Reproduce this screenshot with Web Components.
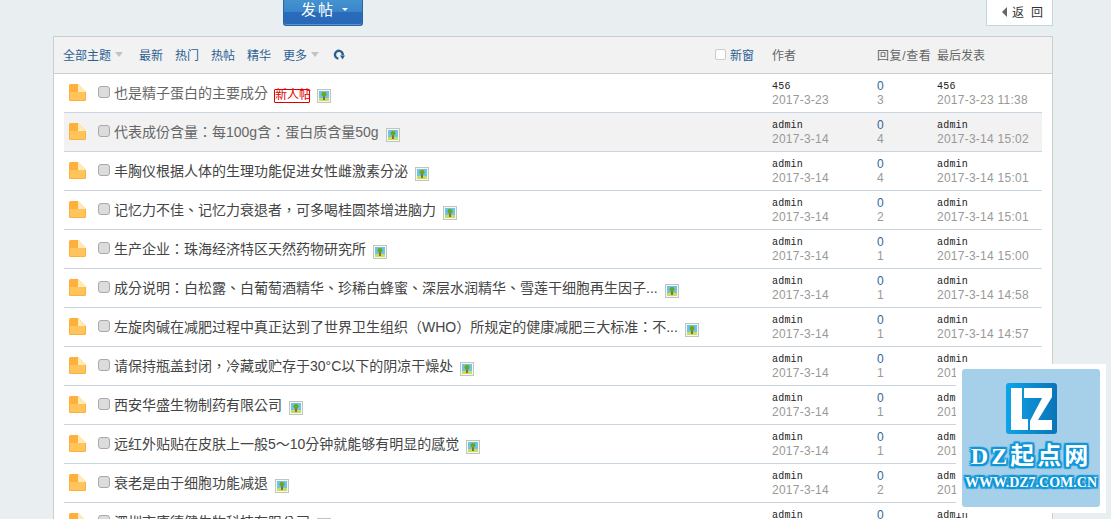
<!DOCTYPE html>
<html>
<head>
<meta charset="utf-8">
<style>
  html, body { margin: 0; padding: 0; height: 519px; overflow: hidden; background: #e9eef1; }
  body { font: 12px "Liberation Sans", "Noto Sans CJK SC", sans-serif; }
</style>
</head>
<body>
<forum-page></forum-page>
<script>
const CJK = '"Liberation Sans", "Noto Sans CJK TC", sans-serif';

class PostButton extends HTMLElement {
  constructor() {
    super();
    this.attachShadow({ mode: "open" }).innerHTML = `
      <style>
        :host { display: flex; box-sizing: border-box; width: 80px; height: 26px; align-items: center; gap: 7px; padding: 0 0 8px 17px;
          border: 1px solid #2a63a6; border-top: 0; border-radius: 0 0 3px 3px; color: #fff; font-size: 15px; letter-spacing: 2px;
          background: linear-gradient(#4592d0 0, #3a86c9 46%, #2a6cbc 47%, #2767b6 100%); box-shadow: inset 0 -1px 0 #5c8fce; }
        i { width: 0; height: 0; border: 3px solid transparent; border-top-color: #fff; border-bottom: 0; margin-top: 2px; }
      </style>
      <span><slot></slot></span><i></i>`;
  }
}
customElements.define("post-button", PostButton);

class BackLink extends HTMLElement {
  constructor() {
    super();
    this.attachShadow({ mode: "open" }).innerHTML = `
      <style>
        :host { display: flex; box-sizing: border-box; width: 67px; height: 26px; align-items: center; padding: 0 0 2px 15px; gap: 5px;
          background: #fff; border: 1px solid #c2d5e3; border-top: 0; color: #333; font-size: 12px; }
        i { width: 0; height: 0; border: 5px solid transparent; border-right-color: #666; border-left: 0; }
        span { letter-spacing: 7px; white-space: nowrap; }
      </style>
      <i></i><span><slot></slot></span>`;
  }
}
customElements.define("back-link", BackLink);

class ThreadHeader extends HTMLElement {
  constructor() {
    super();
    this.attachShadow({ mode: "open" }).innerHTML = `
      <style>
        :host { display: flex; box-sizing: border-box; height: 37px; align-items: center; padding: 0 10px 1px 9px; background: #f2f2f2;
          border-bottom: 1px solid #cdcdcd; font-size: 12px; color: #369; }
        a { color: #2b5f92; }
        .tabs { display: flex; align-items: center; width: 652px; }
        .tabs a { margin-right: 12px; display: flex; align-items: center; }
        .tabs a.first { margin-right: 16px; }
        .tabs a.more { margin-right: 14px; }
        .caret { width: 0; height: 0; border: 4px solid transparent; border-top: 5px solid #bfc5bf; border-bottom: 0; margin-left: 4px; }
        .win { display: flex; align-items: center; width: 57px; gap: 4px; }
        .box { box-sizing: border-box; width: 11px; height: 11px; border: 1px solid #ccc; border-radius: 2px; background: #fdfdfd; }
        .col { color: #666; }
        .author { width: 105px; }
        .reply { width: 60px; letter-spacing: .6px; }
        svg { display: block; }
      </style>
      <div class="tabs">
        <a class="first">全部主题<span class="caret"></span></a>
        <a>最新</a><a>热门</a><a>热帖</a><a>精华</a>
        <a class="more">更多<span class="caret"></span></a>
        <svg width="12" height="12" viewBox="0 0 12 12"><path d="M5.4 9.6A3.9 3.9 0 1 1 9.7 6.4" fill="none" stroke="#2b5f92" stroke-width="2.4"/><path d="M7 6.5h5L9.5 10.5z" fill="#2b5f92"/></svg>
      </div>
      <div class="win"><span class="box"></span><a>新窗</a></div>
      <span class="col author">作者</span>
      <span class="col reply">回复/查看</span>
      <span class="col">最后发表</span>`;
  }
}
customElements.define("thread-header", ThreadHeader);

class ThreadRow extends HTMLElement {
  constructor() {
    super();
    const a = (n) => this.getAttribute(n) || "";
    this.attachShadow({ mode: "open" }).innerHTML = `
      <style>
        :host { display: flex; box-sizing: border-box; height: 39px; flex: none; align-items: center; border-bottom: 1px solid #c9d6e1; color: #444; }
        :host([hl]) { background: #f2f2f2; }
        :host([read]) { color: #666; }
        .folder { width: 17px; height: 17px; margin: -2px 3px 0 5px; flex: none; }
        .check { box-sizing: border-box; width: 12px; height: 12px; margin: -2px 4px 0 9px; flex: none; border: 1px solid #aaa; border-radius: 3px; background: #dcdcdf; }
        .title { width: 658px; flex: none; display: flex; align-items: center; gap: 7px; font: 14px ${CJK}; white-space: nowrap; }
        .title > span:first-child { margin-top: -2px; }
        .tag { box-sizing: border-box; height: 14px; width: 36px; border: 1px solid #e00000; color: #e00000; background: #fff; font-size: 12px; line-height: 11px; text-align: center; border-radius: 1px; margin: 5px 0 0 -1px; }
        .pic { display: block; flex: none; margin-top: 6px; }
        .meta { display: flex; flex-direction: column; font-size: 12px; line-height: 14px; margin-top: 1px; }
        .top { color: #222; font: 10px/12px "Liberation Mono", "DejaVu Sans Mono", monospace; letter-spacing: .2px; margin-top: 1px; }
        .when { color: #999; letter-spacing: .25px; }
        .c1 { width: 105px; }
        .c2 { width: 60px; }
        .c2 .top { color: #369; font: 12px/12px ${CJK}; margin-top: 0; }
        .c2 .when { margin-top: 1px; }
      </style>
      <svg class="folder" viewBox="0 0 17 17">
        <path d="M0 1.5Q0 0 1.5 0H9L17 8V15.5Q17 17 15.5 17H1.5Q0 17 0 15.5Z" fill="#ffaf3c"/>
        <path d="M1 8H16V15Q16 16 15 16H2Q1 16 1 15Z" fill="#ffc55c"/>
        <path d="M9 0L17 8H9Z" fill="#fdecb5"/>
      </svg>
      <span class="check"></span>
      <div class="title">
        <span><slot></slot></span>
        ${this.hasAttribute("new") ? '<span class="tag">新人帖</span>' : ""}
        <svg class="pic" width="14" height="14" viewBox="0 0 14 14">
          <rect x=".5" y=".5" width="13" height="13" fill="#f6f6f2" stroke="#c4c4bc"/>
          <rect x="2" y="2" width="10" height="7" fill="#6cc4ee"/>
          <rect x="2" y="9" width="10" height="3" fill="#c2e05a"/>
          <rect x="6" y="7" width="2" height="4" fill="#9a6a2a"/>
          <rect x="4.5" y="3" width="5" height="4.5" rx="2" fill="#6aaa1a"/>
        </svg>
      </div>
      <div class="meta c1"><span class="top">${a("author")}</span><span class="when">${a("date")}</span></div>
      <div class="meta c2"><span class="top">${a("replies")}</span><span class="when">${a("views")}</span></div>
      <div class="meta"><span class="top">${a("author")}</span><span class="when">${a("last")}</span></div>`;
  }
}
customElements.define("thread-row", ThreadRow);

class SiteBadge extends HTMLElement {
  constructor() {
    super();
    const blue = "#0f96d8";
    const halo = [[2,0],[-2,0],[0,2],[0,-2],[2,2],[-2,-2],[2,-2],[-2,2],[1,0],[-1,0],[0,1],[0,-1]].map((o) => `${o[0]}px ${o[1]}px 1px ${blue}`).join(",");
    this.attachShadow({ mode: "open" }).innerHTML = `
      <style>
        :host { position: absolute; left: 956px; top: 364px; box-sizing: border-box; width: 150px; height: 149px; padding: 5px 6px; background: #fff; }
        .card { box-sizing: border-box; width: 138px; height: 138px; background: #a6cfe9; border-radius: 3px; display: flex; flex-direction: column; align-items: center; padding-top: 14px; }
        .logo { width: 51px; height: 51px; flex: none; }
        .name { font: bold 24px "Liberation Serif", "Noto Sans CJK SC", serif; letter-spacing: 3px; color: #fff; margin-top: 9px; line-height: 26px; text-shadow: ${halo}; white-space: nowrap; }
        .url { font: bold 14px "Liberation Serif", serif; color: #fff; margin-top: 6px; line-height: 16px; text-shadow: ${halo}; white-space: nowrap; }
      </style>
      <div class="card">
        <svg class="logo" viewBox="0 0 51 51">
          <defs><linearGradient id="lg"><stop offset="0" stop-color="#0ea4e6"/><stop offset="1" stop-color="#0a74b8"/></linearGradient></defs>
          <rect width="51" height="51" rx="3" fill="url(#lg)"/>
          <path d="M5 5h11v31h6v11H5z" fill="#fff"/>
          <path d="M18 5h28v9L32 37h14v10H24v-9L36 15H18z" fill="#fff"/>
        </svg>
        <div class="name">DZ起点网</div>
        <div class="url">WWW.DZ7.COM.CN</div>
      </div>`;
  }
}
customElements.define("site-badge", SiteBadge);

const threads = [
  ["也是精子蛋白的主要成分", "456", "2017-3-23", 0, 3, "2017-3-23 11:38", "new read"],
  ["代表成份含量：每100g含：蛋白质含量50g", "admin", "2017-3-14", 0, 4, "2017-3-14 15:02", "hl read"],
  ["丰胸仪根据人体的生理功能促进女性雌激素分泌", "admin", "2017-3-14", 0, 4, "2017-3-14 15:01"],
  ["记忆力不佳、记忆力衰退者，可多喝桂圆茶增进脑力", "admin", "2017-3-14", 0, 2, "2017-3-14 15:01"],
  ["生产企业：珠海经济特区天然药物研究所", "admin", "2017-3-14", 0, 1, "2017-3-14 15:00"],
  ["成分说明：白松露、白葡萄酒精华、珍稀白蜂蜜、深层水润精华、雪莲干细胞再生因子...", "admin", "2017-3-14", 0, 1, "2017-3-14 14:58"],
  ["左旋肉碱在减肥过程中真正达到了世界卫生组织（WHO）所规定的健康减肥三大标准：不...", "admin", "2017-3-14", 0, 1, "2017-3-14 14:57"],
  ["请保持瓶盖封闭，冷藏或贮存于30°C以下的阴凉干燥处", "admin", "2017-3-14", 0, 1, "2017-3-14 14:57"],
  ["西安华盛生物制药有限公司", "admin", "2017-3-14", 0, 1, "2017-3-14 14:56"],
  ["远红外贴贴在皮肤上一般5～10分钟就能够有明显的感觉", "admin", "2017-3-14", 0, 1, "2017-3-14 14:56"],
  ["衰老是由于细胞功能减退", "admin", "2017-3-14", 0, 2, "2017-3-14 14:55"],
  ["深圳市康德健生物科技有限公司", "admin", "2017-3-14", 0, 1, "2017-3-14 14:55"],
];

class ThreadList extends HTMLElement {
  constructor() {
    super();
    const rows = threads.map((t) => `<thread-row author="${t[1]}" date="${t[2]}" replies="${t[3]}" views="${t[4]}" last="${t[5]}" ${t[6] || ""}>${t[0]}</thread-row>`).join("");
    this.attachShadow({ mode: "open" }).innerHTML = `
      <style>
        :host { display: block; box-sizing: border-box; width: 1000px; margin-left: 53px; height: 600px; background: #fff; border: 1px solid #cdcdcd; }
        .rows { display: flex; flex-direction: column; padding: 0 10px; }
      </style>
      <thread-header></thread-header>
      <div class="rows">${rows}</div>`;
  }
}
customElements.define("thread-list", ThreadList);

class ForumPage extends HTMLElement {
  constructor() {
    super();
    this.attachShadow({ mode: "open" }).innerHTML = `
      <style>
        :host { display: block; }
        .top { display: flex; justify-content: space-between; height: 36px; padding: 0 58px 0 283px; }
      </style>
      <div class="top"><post-button>发帖</post-button><back-link>返回</back-link></div>
      <thread-list></thread-list>
      <site-badge></site-badge>`;
  }
}
customElements.define("forum-page", ForumPage);
</script>
</body>
</html>
